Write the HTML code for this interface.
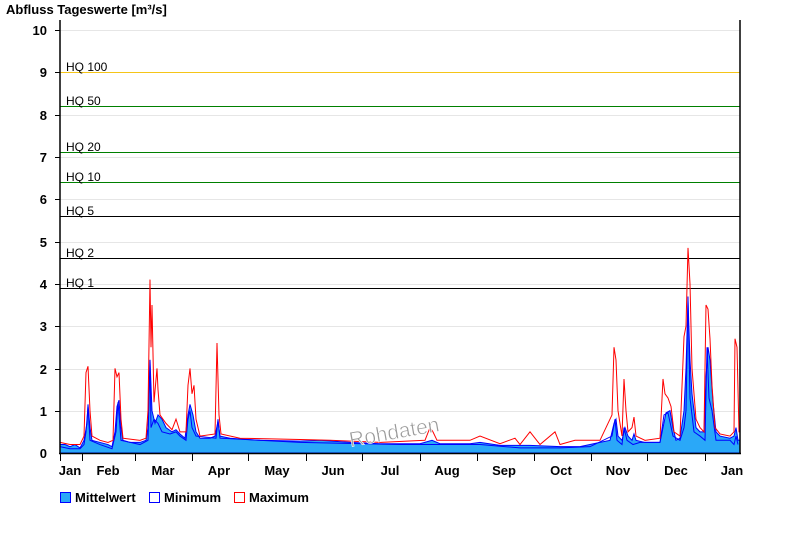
<!DOCTYPE html>
<html><head><meta charset="utf-8"><style>
body{margin:0;background:#fff;width:800px;height:550px;overflow:hidden;font-family:"Liberation Sans",Arial,sans-serif}
svg text{font-family:"Liberation Sans",Arial,sans-serif}
</style></head><body>
<svg width="800" height="550" xmlns="http://www.w3.org/2000/svg">
<text x="6" y="14" font-size="13" font-weight="bold" fill="#000">Abfluss Tageswerte [m³/s]</text>
<g stroke="#e6e6e6" stroke-width="1">
<line x1="60" y1="30.5" x2="740" y2="30.5"/><line x1="60" y1="72.5" x2="740" y2="72.5"/>
<line x1="60" y1="115.5" x2="740" y2="115.5"/><line x1="60" y1="157.5" x2="740" y2="157.5"/>
<line x1="60" y1="199.5" x2="740" y2="199.5"/><line x1="60" y1="242.5" x2="740" y2="242.5"/>
<line x1="60" y1="284.5" x2="740" y2="284.5"/><line x1="60" y1="326.5" x2="740" y2="326.5"/>
<line x1="60" y1="369.5" x2="740" y2="369.5"/><line x1="60" y1="411.5" x2="740" y2="411.5"/>
</g>
<g font-size="12" fill="#000">
<line x1="60" y1="72.5" x2="740" y2="72.5" stroke="#f5c518"/><text x="66" y="71">HQ 100</text>
<line x1="60" y1="106.5" x2="740" y2="106.5" stroke="#008000"/><text x="66" y="105">HQ 50</text>
<line x1="60" y1="152.5" x2="740" y2="152.5" stroke="#008000"/><text x="66" y="151">HQ 20</text>
<line x1="60" y1="182.5" x2="740" y2="182.5" stroke="#008000"/><text x="66" y="181">HQ 10</text>
<line x1="60" y1="216.5" x2="740" y2="216.5" stroke="#000"/><text x="66" y="215">HQ 5</text>
<line x1="60" y1="258.5" x2="740" y2="258.5" stroke="#000"/><text x="66" y="257">HQ 2</text>
<line x1="60" y1="288.5" x2="740" y2="288.5" stroke="#000"/><text x="66" y="287">HQ 1</text>
</g>
<g transform="translate(0,453) scale(1,-42.3)">
<polygon fill="#2aa8f8" stroke="#0000ff" stroke-width="1" vector-effect="non-scaling-stroke" points="60,0 60,.2 65,.2 70,.15 75,.2 80,.12 84,.3 87,.7 88,1.15 90,.6 92,.3 100,.25 108,.2 112,.15 115,.5 117,1.1 119,1.25 121,.6 123,.3 130,.25 140,.25 146,.3 148,.6 150,2.2 152,1.0 155,.7 158,.9 162,.8 166,.6 172,.5 176,.55 180,.45 185,.35 188,.9 190,1.15 193,.9 196,.5 200,.35 210,.35 215,.4 218,.75 220,.4 230,.35 260,.3 300,.28 320,.3 350,.25 380,.22 420,.22 432,.3 440,.22 470,.22 480,.25 500,.18 530,.18 560,.15 580,.15 600,.25 610,.3 614,.7 616,.8 618,.4 622,.3 625,.6 628,.4 632,.3 634,.45 636,.3 645,.25 660,.25 663,.6 666,.95 670,1.0 673,.6 676,.3 680,.35 684,1.0 686,2.0 688,3.6 690,2.2 692,1.4 696,.6 700,.5 704,.5 706,1.8 708,2.5 710,2.2 713,1.2 716,.5 720,.4 730,.35 734,.4 736,.6 738,.3 740,.3 740,0"/>
<polyline fill="none" stroke="#0000ff" stroke-width="1" vector-effect="non-scaling-stroke" points="60,.15 70,.1 80,.1 84,.2 86,.5 88,1.1 90,.3 100,.2 112,.1 116,.5 118,1.2 121,.3 140,.2 148,.3 150,2.2 151,.6 154,.8 158,.7 162,.5 170,.45 176,.5 180,.4 186,.3 188,.8 190,1.0 192,.6 196,.4 216,.35 218,.8 220,.35 300,.25 400,.2 480,.2 520,.12 560,.12 590,.15 612,.4 615,.8 617,.3 622,.2 624,.6 627,.3 633,.2 640,.25 660,.25 664,.9 668,.95 673,.4 680,.3 684,.6 686,1.0 688,3.7 690,1.3 694,.5 700,.4 705,.3 707,2.5 709,1.3 712,1.0 716,.3 730,.3 734,.2 736,.4 738,.2"/>
<polyline fill="none" stroke="#ff0000" stroke-width="1" vector-effect="non-scaling-stroke" points="60,.25 70,.2 80,.2 84,.4 86,1.9 88,2.05 90,1.0 92,.4 100,.3 108,.25 113,.3 115,2.0 117,1.8 119,1.9 121,.8 123,.35 140,.3 146,.35 148,1.0 150,4.1 151,2.5 152,3.5 154,1.2 157,2.0 158,1.5 160,.9 166,.7 172,.55 176,.8 180,.5 186,.5 188,1.6 190,2.0 192,1.4 194,1.6 196,.8 200,.4 215,.45 217,2.6 219,.9 221,.45 240,.35 300,.32 330,.3 380,.25 425,.3 430,.6 433,.5 437,.3 470,.3 480,.4 500,.22 515,.35 520,.2 530,.5 540,.2 555,.5 560,.2 575,.3 590,.3 600,.3 612,.9 614,2.5 616,2.2 618,1.0 622,.4 624,1.75 626,1.0 628,.5 632,.6 634,.85 636,.4 645,.3 660,.35 663,1.75 665,1.4 668,1.3 671,1.1 674,.5 680,.4 684,2.75 686,3.0 688,4.85 690,4.0 692,2.0 696,.8 700,.6 704,.5 706,3.5 708,3.4 710,2.7 712,1.6 715,.6 720,.45 730,.4 734,.5 735,2.7 737,2.5 739,.5 740,.5"/>
</g>
<text x="348" y="438" font-size="21" fill="#999" stroke="#fff" stroke-width="0.6" transform="rotate(-10 400 428)">Rohdaten</text>
<g stroke="#000" stroke-width="1.5">
<line x1="60" y1="20" x2="60" y2="454"/>
<line x1="740" y1="20" x2="740" y2="454"/>
<line x1="59" y1="453.5" x2="741" y2="453.5"/>
</g>
<g stroke="#000" stroke-width="1">
<line x1="55" y1="30.5" x2="60" y2="30.5"/><line x1="55" y1="72.5" x2="60" y2="72.5"/><line x1="55" y1="115.5" x2="60" y2="115.5"/><line x1="55" y1="157.5" x2="60" y2="157.5"/><line x1="55" y1="199.5" x2="60" y2="199.5"/><line x1="55" y1="242.5" x2="60" y2="242.5"/><line x1="55" y1="284.5" x2="60" y2="284.5"/><line x1="55" y1="326.5" x2="60" y2="326.5"/><line x1="55" y1="369.5" x2="60" y2="369.5"/><line x1="55" y1="411.5" x2="60" y2="411.5"/>
<line x1="60.5" y1="453" x2="60.5" y2="461"/><line x1="82.5" y1="453" x2="82.5" y2="461"/><line x1="135.5" y1="453" x2="135.5" y2="461"/><line x1="192.5" y1="453" x2="192.5" y2="461"/><line x1="248.5" y1="453" x2="248.5" y2="461"/><line x1="306.5" y1="453" x2="306.5" y2="461"/><line x1="362.5" y1="453" x2="362.5" y2="461"/><line x1="420.5" y1="453" x2="420.5" y2="461"/><line x1="477.5" y1="453" x2="477.5" y2="461"/><line x1="534.5" y1="453" x2="534.5" y2="461"/><line x1="591.5" y1="453" x2="591.5" y2="461"/><line x1="647.5" y1="453" x2="647.5" y2="461"/><line x1="705.5" y1="453" x2="705.5" y2="461"/>
</g>
<g font-size="13" font-weight="bold" fill="#000" text-anchor="end">
<text x="47" y="35">10</text><text x="47" y="77">9</text><text x="47" y="120">8</text><text x="47" y="162">7</text><text x="47" y="204">6</text><text x="47" y="247">5</text><text x="47" y="289">4</text><text x="47" y="331">3</text><text x="47" y="374">2</text><text x="47" y="416">1</text><text x="47" y="458">0</text>
</g>
<g font-size="13" font-weight="bold" fill="#000" text-anchor="middle">
<text x="70" y="475">Jan</text><text x="108" y="475">Feb</text><text x="163" y="475">Mar</text><text x="219" y="475">Apr</text><text x="277" y="475">May</text><text x="333" y="475">Jun</text><text x="390" y="475">Jul</text><text x="447" y="475">Aug</text><text x="504" y="475">Sep</text><text x="561" y="475">Oct</text><text x="618" y="475">Nov</text><text x="676" y="475">Dec</text><text x="732" y="475">Jan</text>
</g>
<rect x="60.5" y="492.5" width="10" height="10" fill="#2aa8f8" stroke="#0000ff"/>
<text x="75" y="502" font-size="13" font-weight="bold">Mittelwert</text>
<rect x="149.5" y="492.5" width="10" height="10" fill="#fff" stroke="#0000ff"/>
<text x="164" y="502" font-size="13" font-weight="bold">Minimum</text>
<rect x="234.5" y="492.5" width="10" height="10" fill="#fff" stroke="#ff0000"/>
<text x="249" y="502" font-size="13" font-weight="bold">Maximum</text>
</svg>
</body></html>
